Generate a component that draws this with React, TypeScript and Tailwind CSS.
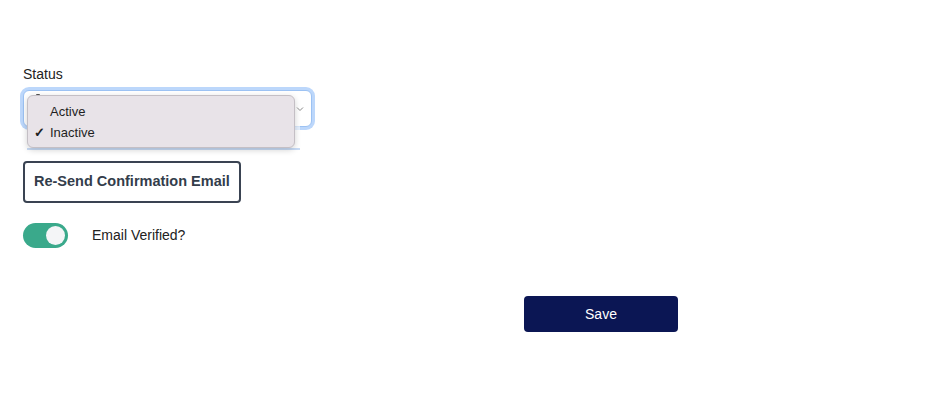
import React from "react";

export default function App() {
  return (
    <div
      className="w-[935px] h-[417px] bg-white pl-[23px] pt-[64px] text-[#222]"
      style={{ fontFamily: '"Liberation Sans", Arial, Helvetica, sans-serif' }}
    >
      <div className="text-[14px] leading-5">Status</div>
      <div className="relative mt-[6px] w-[289px] h-[37px]">
        <div className="w-full h-full rounded-[6px] border border-[#9cc2f3] ring-[3px] ring-[#bcd7fb] bg-white" />
        <div className="absolute left-[13px] top-[4px] w-[4px] h-[2px] rounded-full bg-[#555]" />
        <svg width="8" height="6" viewBox="0 0 8 6" className="absolute right-[8px] top-[16px] z-10">
          <path d="M1 1.5 L4 4.5 L7 1.5" fill="none" stroke="#888" strokeWidth="1" />
        </svg>
        <div className="absolute left-[4px] top-[5px] w-[273px] h-[55px] border-b-2 border-[#c9dcf6] bg-white/60" />
        <div className="absolute left-[4px] top-[5px] w-[268px] h-[53px] rounded-[6px] border border-[#c4bfc5] bg-[#e8e3e8] shadow-[0_2px_6px_rgba(0,0,0,0.18)] pt-[5px] text-[13px] leading-[21px] text-[#1f1f1f]">
          <div className="pl-[22px]">Active</div>
          <div className="pl-[6px] flex items-center">
            <span className="w-[16px] text-[13px] font-bold">✓</span>
            <span>Inactive</span>
          </div>
        </div>
      </div>
      <button className="mt-[34px] h-[42px] px-[9px] rounded-[4px] border-2 border-[#3a4352] bg-white text-[14.5px] font-bold text-[#333d4b]">
        Re-Send Confirmation Email
      </button>
      <div className="mt-[20px] flex items-center">
        <div className="w-[45px] h-[25px] rounded-full bg-[#3aa98b] flex items-center justify-end pr-[3px]">
          <div className="w-[19px] h-[19px] rounded-full bg-[#f4f5f7]" />
        </div>
        <span className="ml-[24px] text-[14px] text-[#222]">Email Verified?</span>
      </div>
      <button className="mt-[48px] ml-[501px] w-[154px] h-[36px] rounded-[4px] bg-[#0b1654] text-white text-[14px]">
        Save
      </button>
    </div>
  );
}
